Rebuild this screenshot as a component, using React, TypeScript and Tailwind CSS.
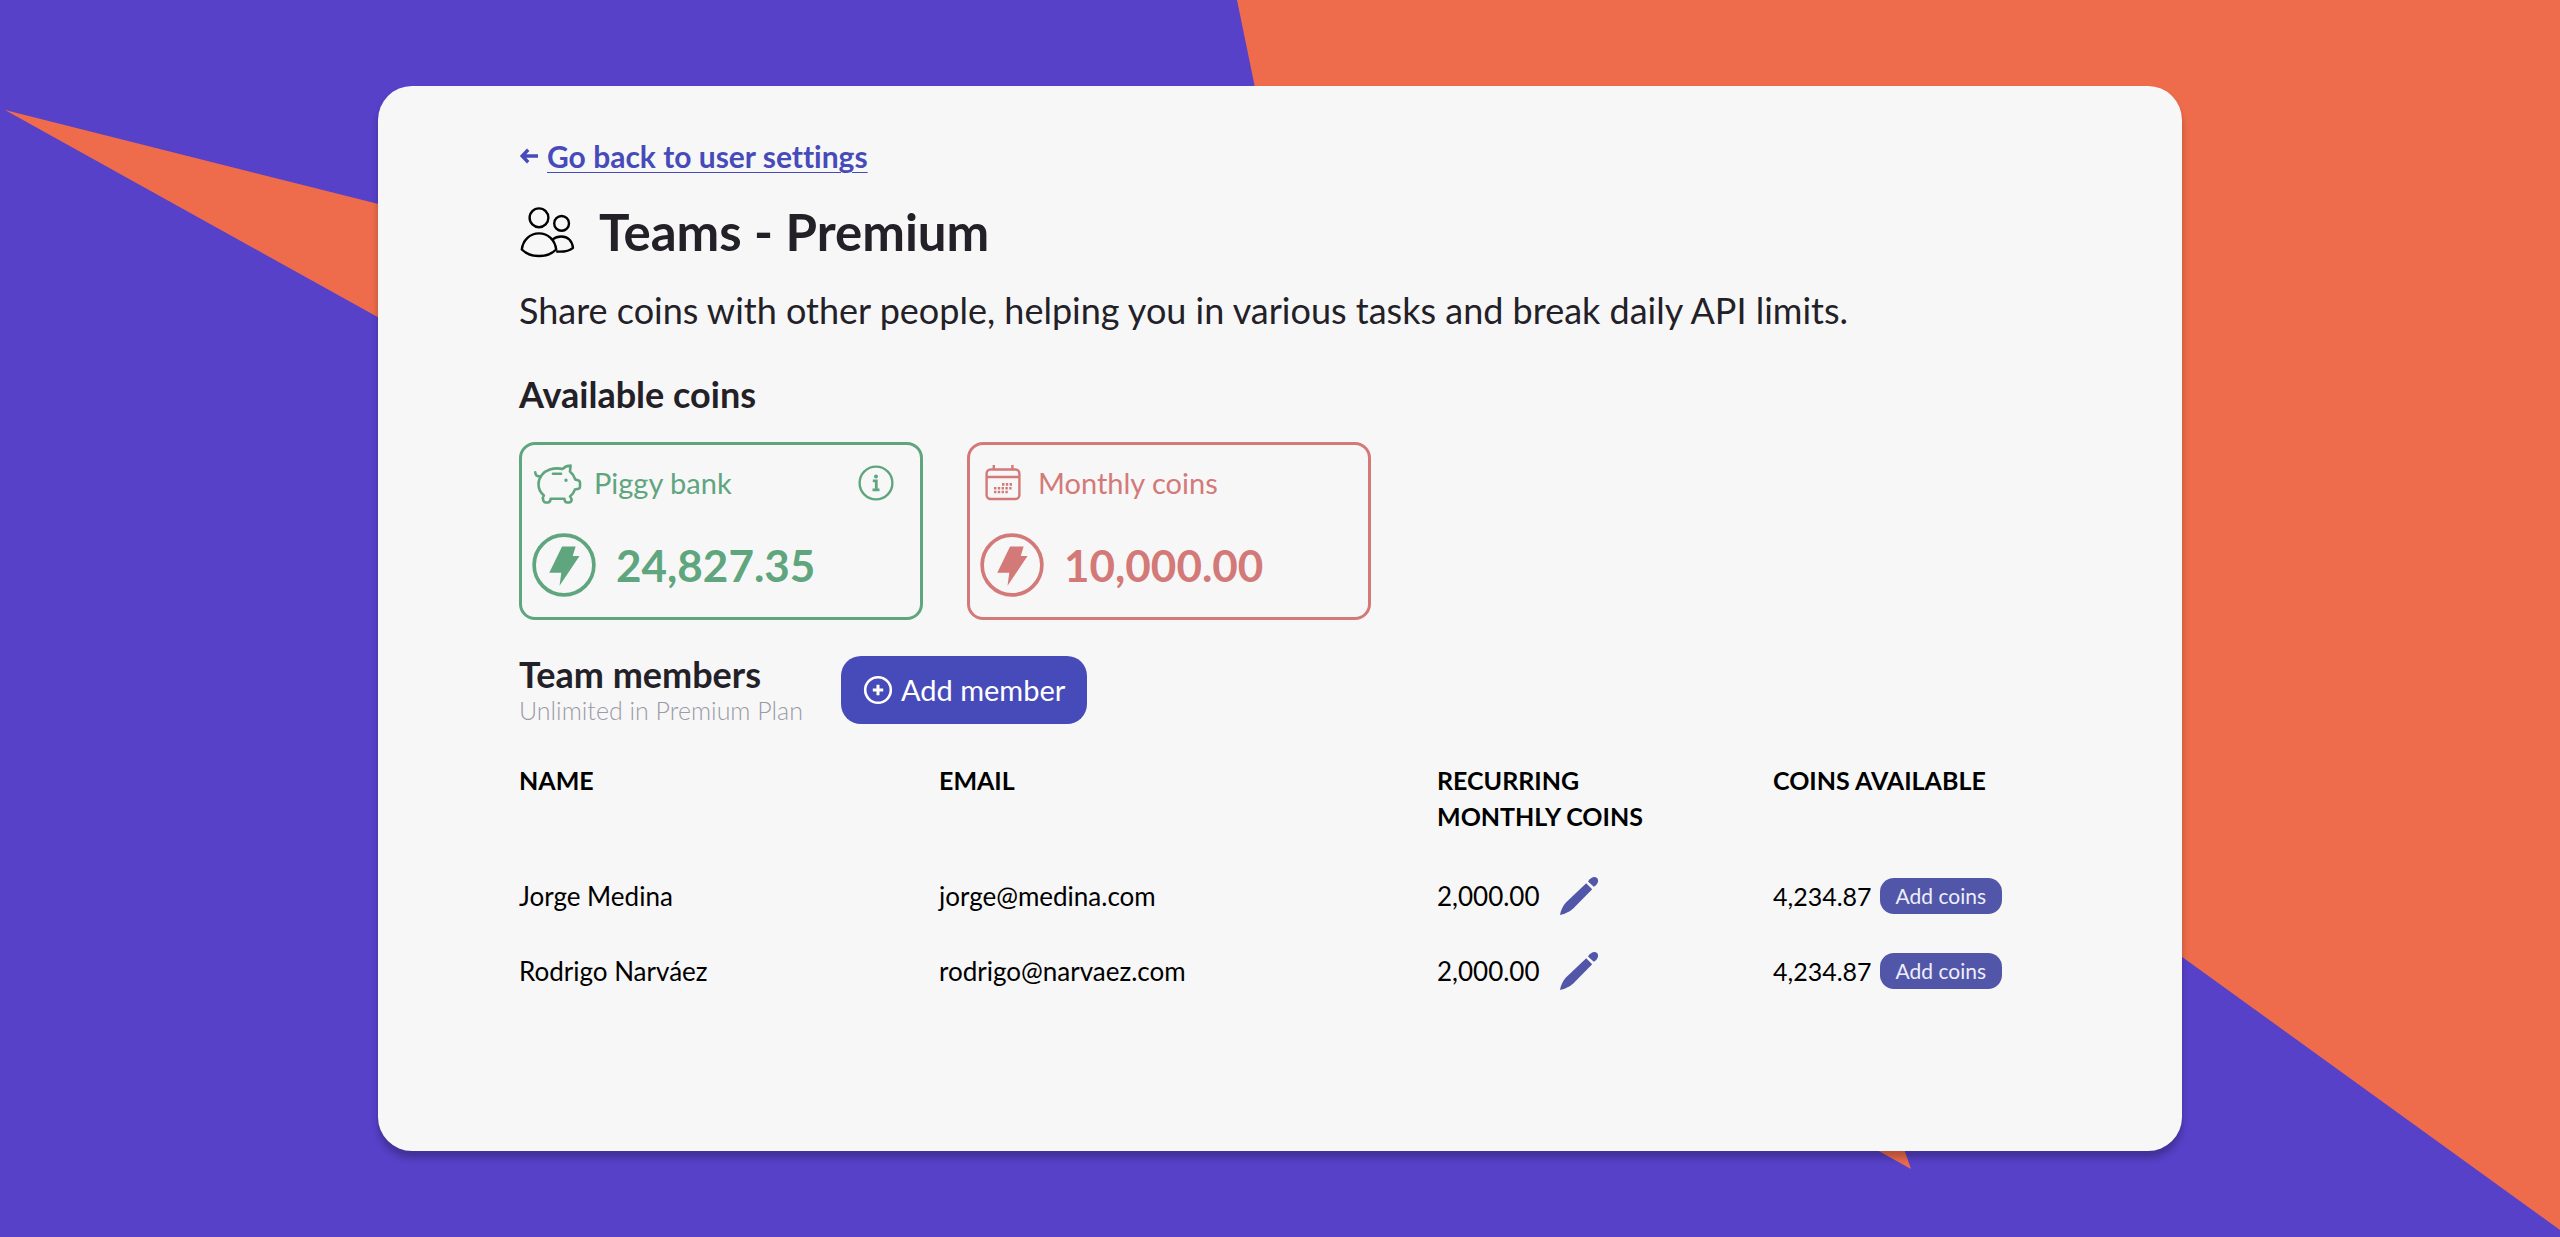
import React from 'react';

const members = [
    { name: 'Jorge Medina', email: 'jorge@medina.com', monthly: '2,000.00', available: '4,234.87' },
    { name: 'Rodrigo Narváez', email: 'rodrigo@narvaez.com', monthly: '2,000.00', available: '4,234.87' },
];

interface IconProps {
    className?: string;
}

const ArrowIcon: React.FC<IconProps> = ({ className }) => (
    <svg className={className} viewBox="0 0 20 20" fill="none" stroke="currentColor" strokeWidth="3.4" aria-hidden="true">
        <path d="M19 10H4M9.2 3.8L3.2 10l6 6.2" />
    </svg>
);

const TeamIcon: React.FC<IconProps> = ({ className }) => (
    <svg className={className} viewBox="0 0 56 54" fill="none" stroke="currentColor" strokeWidth="2.4" strokeLinejoin="round" aria-hidden="true">
        <circle cx="20" cy="12.8" r="9.4" />
        <circle cx="42.6" cy="18.4" r="7.4" />
        <path d="M2.8 44.5C4 35 11 28.4 20 28.4S36 35 37.2 44.5C33 48.8 27 51 20 51S7 48.8 2.8 44.5z" />
        <path d="M33.2 34.6c2.6-2 5.8-3.1 9.2-3.1 6 0 10.6 4.2 11.6 11.3-3.5 3.2-9.5 4.2-16.8 3.7" />
    </svg>
);

const PiggyIcon: React.FC<IconProps> = ({ className }) => (
    <svg className={className} viewBox="0 0 50 44" fill="none" stroke="currentColor" strokeWidth="2.6" strokeLinejoin="round" strokeLinecap="round" aria-hidden="true">
        <path d="M3.3 11.2c-.2 2.6 1.3 4.3 4.2 4" />
        <path d="M38.6 4.6c-3.4.2-6 1.3-7.8 3.3-4.2-.8-9.2-.6-13 .7C11 10.8 6.5 16.5 6.5 23.3c0 4.5 1.9 8.3 5.4 11.2-1.3 1.7-1.3 3.2-.7 4.4.3 1.9 1 2.6 2.6 2.6h2c1.7 0 2.6-1 2.9-3.8h13.6c.3 2.8 1.2 3.8 2.9 3.8h1.6c1.9 0 2.7-1 2.9-2.8-.2-1.2-.8-2.2-1.7-3.2 2.2-1.8 3.9-4 4.9-6.9l3.6-.9c.9-.2 1.5-1 1.5-1.9v-4.4c0-.9-.5-1.6-1.4-1.9l-3.3-1c-1.1-3.2-2.8-5.9-5.3-8 .2-2.1.4-4 .5-5.9z" />
        <path d="M21 12.7h8" />
        <circle cx="34" cy="19.3" r="1" fill="currentColor" strokeWidth="1.4" />
    </svg>
);

const CalendarIcon: React.FC<IconProps> = ({ className }) => (
    <svg className={className} viewBox="0 0 36 36" fill="none" stroke="currentColor" strokeWidth="2.4" aria-hidden="true">
        <rect x="1.6" y="4.5" width="32.8" height="29.5" rx="4" />
        <path d="M1.6 12h32.8M8.8 0v5M27.4 0v5" />
        <path d="M17 19.4h11M9 23.2h19M9 27h14" strokeDasharray="2.4 1.4" strokeWidth="2.6" />
    </svg>
);

const CoinIcon: React.FC<IconProps> = ({ className }) => (
    <svg className={className} viewBox="0 0 66 66" aria-hidden="true">
        <circle cx="33" cy="33" r="30.8" fill="none" stroke="currentColor" strokeWidth="3.8" />
        <path d="M31 14h14l-3 9.7h7L28.4 54.5l1.8-13.5H17.8z" fill="currentColor" />
    </svg>
);

const InfoIcon: React.FC<IconProps> = ({ className }) => (
    <svg className={className} viewBox="0 0 36 36" fill="none" stroke="currentColor" strokeWidth="2.4" aria-hidden="true">
        <circle cx="18" cy="18" r="16.4" />
        <path d="M14.8 15.8h3.5v9M14.5 24.8h7" strokeWidth="2.8" />
        <circle cx="18" cy="11.5" r="2" fill="currentColor" stroke="none" />
    </svg>
);

const PlusCircleIcon: React.FC<IconProps> = ({ className }) => (
    <svg className={className} viewBox="0 0 30 30" fill="none" stroke="currentColor" strokeWidth="2.6" aria-hidden="true">
        <circle cx="15" cy="15" r="12.8" />
        <path d="M15 9.8v10.4M9.8 15h10.4" strokeWidth="3" />
    </svg>
);

const PencilIcon: React.FC<IconProps> = ({ className }) => (
    <svg className={className} viewBox="0 0 38 38" fill="currentColor" aria-hidden="true">
        <path d="M26.2 6.2l6 6L13.5 31.2C10.5 34.2 5 36.8 0 38c.7-5 3.3-9.8 6.2-12.8z" />
        <path d="M28 4.6C30.5.2 34.8-1 37 1s1.2 6-3.2 8.8z" />
    </svg>
);

interface BalanceCardProps {
    label: string;
    amount: string;
    icon: React.ReactNode;
    color: string;
    info?: boolean;
}

const BalanceCard: React.FC<BalanceCardProps> = ({ label, amount, icon, color, info }) => (
    <div className={`w-[404px] px-[10px] pt-[14px] pb-5 border-[3px] rounded-2xl ${color}`}>
        <div className="flex items-center justify-between h-12 pr-4">
            <div className="flex items-center gap-3">
                {icon}
                <span className="text-[29px] leading-9">{label}</span>
            </div>
            {info && (
                <button type="button" aria-label="About the piggy bank">
                    <InfoIcon className="size-9" />
                </button>
            )}
        </div>
        <div className="flex items-center gap-5 mt-[26px]">
            <CoinIcon className="size-16" />
            <span className="text-[44px] leading-[52px] font-bold">{amount}</span>
        </div>
    </div>
);

export default function App() {
    return (
        <div className="relative isolate min-h-screen flex justify-center py-[86px] px-6 bg-[#5741c9] font-['Lato',sans-serif] [font-variant-ligatures:none] text-[#232127]">
            {/* Backdrop */}
            <svg className="absolute inset-0 -z-10 w-full h-full" viewBox="0 0 2560 1237" preserveAspectRatio="none" aria-hidden="true">
                <path d="M1237 0L1328 443 5 110 1911 1169 1720 623 2560 1230V0z" fill="#ee6c4b" />
            </svg>

            <main className="w-full max-w-[1804px] px-[141px] pt-[52px] pb-20 rounded-[34px] bg-[#f7f7f7] shadow-[0_7px_7px_rgba(0,0,0,0.25)]">
                <a href="#settings" className="inline-flex items-center gap-2 text-[30px] leading-9 font-bold text-[#474bb9]">
                    <ArrowIcon className="size-5" />
                    <span className="underline decoration-1 underline-offset-4">Go back to user settings</span>
                </a>

                {/* Title */}
                <h1 className="flex items-center gap-6 mt-7 text-[51px] leading-[60px] font-bold">
                    <TeamIcon className="w-14 h-[54px] text-black" />
                    Teams - Premium
                </h1>
                <p className="mt-6 text-[36px] leading-[48px]">
                    Share coins with other people, helping you in various tasks and break daily API limits.
                </p>

                {/* Balances */}
                <h2 className="mt-9 text-[36px] leading-[48px] font-bold">Available coins</h2>
                <div className="flex gap-11 mt-6">
                    <BalanceCard label="Piggy bank" amount="24,827.35" icon={<PiggyIcon className="w-[50px] h-11" />} color="text-[#5fa57e] border-[#5fa57e]" info />
                    <BalanceCard label="Monthly coins" amount="10,000.00" icon={<CalendarIcon className="size-9 mx-[5px]" />} color="text-[#d37a79] border-[#d37a79]" />
                </div>

                {/* Members */}
                <div className="flex items-center gap-[38px] mt-[34px]">
                    <div>
                        <h2 className="text-[36px] leading-10 font-bold">Team members</h2>
                        <p className="text-[25px] leading-8 font-light text-[#9b9aa8]">Unlimited in Premium Plan</p>
                    </div>
                    <button type="button" className="flex items-center gap-2 h-[68px] px-[22px] rounded-[20px] bg-[#474bb9] text-[29px] text-white">
                        <PlusCircleIcon className="size-[30px]" />
                        Add member
                    </button>
                </div>

                <table className="w-full mt-9 table-fixed text-left text-[25px] leading-9 text-black">
                    <thead>
                        <tr className="align-top uppercase">
                            <th className="w-[420px] pb-6 font-bold">Name</th>
                            <th className="w-[498px] pb-6 font-bold">Email</th>
                            <th className="w-[336px] pb-6 pr-20 font-bold">Recurring monthly coins</th>
                            <th className="pb-6 font-bold">Coins available</th>
                        </tr>
                    </thead>
                    <tbody className="text-[26px]">
                        {members.map((member) => (
                            <tr key={member.email} className="h-[75px]">
                                <td>{member.name}</td>
                                <td>{member.email}</td>
                                <td>
                                    <div className="flex items-center gap-5">
                                        {member.monthly}
                                        <button type="button" aria-label={`Edit monthly coins of ${member.name}`} className="text-[#5156a8]">
                                            <PencilIcon className="size-[38px]" />
                                        </button>
                                    </div>
                                </td>
                                <td>
                                    <div className="flex items-center gap-2 text-[25px]">
                                        {member.available}
                                        <button type="button" className="h-9 px-4 rounded-[14px] bg-[#5156a8] text-[21px] leading-6 text-[#eeeefb]">Add coins</button>
                                    </div>
                                </td>
                            </tr>
                        ))}
                    </tbody>
                </table>
            </main>
        </div>
    );
}
